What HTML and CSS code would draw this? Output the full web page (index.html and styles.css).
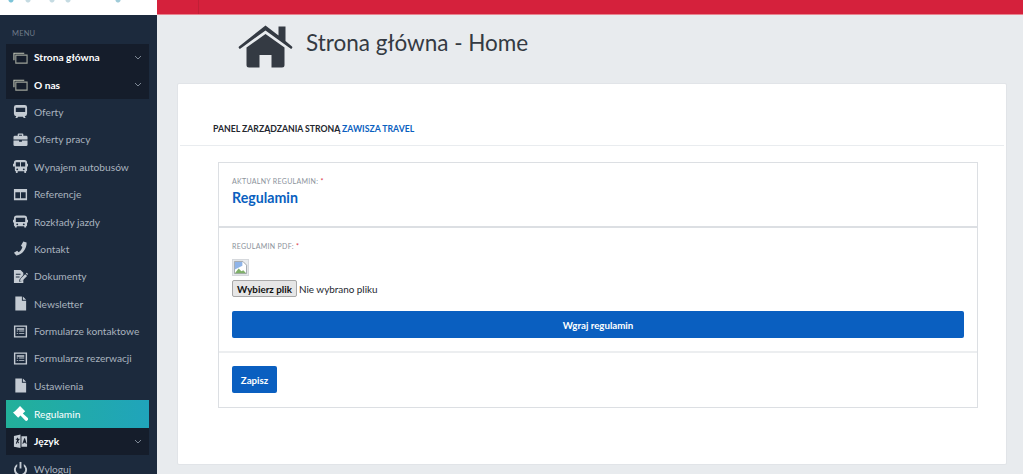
FILE: index.html
```html
<!DOCTYPE html>
<html lang="pl">
<head>
<meta charset="utf-8">
<title>Strona główna - Home</title>
<link rel="stylesheet" href="styles.css">
</head>
<body>
<div class="layout">
<aside class="side">
<div class="logo"></div>
<div class="menu-label">MENU</div>
<nav class="menu">
<a class="item open"><svg class="ic" viewBox="0 0 16 16"><path d="M1 11V3.500h11" fill="none" stroke="#c3c8b8" stroke-width="1.200"/><path d="M3 5.500h12v8.500H3z" fill="none" stroke="#9ea39a" stroke-width="1.200"/></svg><span>Strona główna</span><svg class="chev" viewBox="0 0 8 5"><path d="M1 1l3 3 3-3" fill="none" stroke="#7d8794"/></svg></a>
<a class="item open"><svg class="ic" viewBox="0 0 16 16"><path d="M1 11V3.500h11" fill="none" stroke="#c3c8b8" stroke-width="1.200"/><path d="M3 5.500h12v8.500H3z" fill="none" stroke="#9ea39a" stroke-width="1.200"/></svg><span>O nas</span><svg class="chev" viewBox="0 0 8 5"><path d="M1 1l3 3 3-3" fill="none" stroke="#7d8794"/></svg></a>
<a class="item"><svg class="ic" viewBox="0 0 16 16"><path fill-rule="evenodd" d="M3.500 1h9A2.500 2.500 0 0 1 15 3.500v7a2.500 2.500 0 0 1-2.500 2.500l1 2h-2l-1-1.500h-5l-1 1.500h-2l1-2A2.500 2.500 0 0 1 1 10.500v-7A2.500 2.500 0 0 1 3.500 1zM3 4v4.500h10V4z"/></svg><span>Oferty</span></a>
<a class="item"><svg class="ic" viewBox="0 0 16 16"><path d="M5 4V2.500A1 1 0 0 1 6 1.500h4a1 1 0 0 1 1 1V4h3a1.500 1.500 0 0 1 1.500 1.500V8h-15V5.500A1.500 1.500 0 0 1 2 4zm1.400 0h3.200V3H6.400zM.5 9h6v1.500h3V9h6v4.500A1.500 1.500 0 0 1 14 15H2a1.500 1.500 0 0 1-1.500-1.500z"/></svg><span>Oferty pracy</span></a>
<a class="item"><svg class="ic" viewBox="0 0 16 16"><path fill-rule="evenodd" d="M4 1h8a3 3 0 0 1 3 3v1h1v3h-1v4a1 1 0 0 1-1 1v1.500a.5.5 0 0 1-.5.5h-1a.5.5 0 0 1-.5-.5V13H5v1.500a.5.5 0 0 1-.5.5h-1a.5.5 0 0 1-.5-.5V13a1 1 0 0 1-1-1V8H0V5h1V4a3 3 0 0 1 3-3zm-1 2.500V8h4.500V3.500zm5.500 0V8H13V3.500zM4.500 10a1 1 0 1 0 0 2 1 1 0 0 0 0-2zm7 0a1 1 0 1 0 0 2 1 1 0 0 0 0-2z"/></svg><span>Wynajem autobusów</span></a>
<a class="item"><svg class="ic" viewBox="0 0 16 16"><path fill-rule="evenodd" d="M1 2h14v12H1zm1.500 3.500V12h5V5.500zm6 0V12h5V5.500z"/></svg><span>Referencje</span></a>
<a class="item"><svg class="ic" viewBox="0 0 16 16"><path fill-rule="evenodd" d="M4 1.500h8a3 3 0 0 1 3 3V6h1v3h-1v3a1 1 0 0 1-1 1v1a.5.5 0 0 1-.5.5h-1A.5.5 0 0 1 12 14v-1H4v1a.5.5 0 0 1-.5.5h-1A.5.5 0 0 1 2 14v-1a1 1 0 0 1-1-1V9H0V6h1V4.500a3 3 0 0 1 3-3zM3 4v4.500h10V4zm1.500 6a1 1 0 1 0 0 2 1 1 0 0 0 0-2zm7 0a1 1 0 1 0 0 2 1 1 0 0 0 0-2z"/></svg><span>Rozkłady jazdy</span></a>
<a class="item"><svg class="ic" viewBox="0 0 16 16"><path d="M11 .5l3.500 1c.3 6.500-4.500 13-11 14L1 12.500l3.500-2 1.500 1.500c2-1 3.500-3.500 4-5.500L8.500 5z"/></svg><span>Kontakt</span></a>
<a class="item"><svg class="ic" viewBox="0 0 16 16"><path d="M1 1h7l3 3v2.500L7 11l-.5 2.500L9 13l2-2v4H1zM3 5v1h5V5zm0 3v1h4V8z"/><path d="M8 10.500l5-5 2 2-5 5-2.500.500zM13.700 4.800l1-.8 1.300 1.300-.8 1.200z"/></svg><span>Dokumenty</span></a>
<a class="item"><svg class="ic" viewBox="0 0 16 16"><path d="M2.500 0.500h7v4.500H14v10.500H2.500zM10.500 .5L14 4h-3.500z"/></svg><span>Newsletter</span></a>
<a class="item"><svg class="ic" viewBox="0 0 16 16"><path fill-rule="evenodd" d="M1 1.500h14v13H1zm1.500 1.500v10h11V3zM4 4.500h8V6H4zm0 2.500h1.500v1H4zm2.500 0H12v1H6.500zM4 9.500h1.500v1H4zm2.500 0H12v1H6.500z"/></svg><span>Formularze kontaktowe</span></a>
<a class="item"><svg class="ic" viewBox="0 0 16 16"><path fill-rule="evenodd" d="M1 1.500h14v13H1zm1.500 1.500v10h11V3zM4 4.500h8V6H4zm0 2.500h1.500v1H4zm2.500 0H12v1H6.500zM4 9.500h1.500v1H4zm2.500 0H12v1H6.500z"/></svg><span>Formularze rezerwacji</span></a>
<a class="item"><svg class="ic" viewBox="0 0 16 16"><path d="M2.500 0.500h7v4.500H14v10.500H2.500zM10.500 .5L14 4h-3.500z"/></svg><span>Ustawienia</span></a>
<a class="item active"><svg class="ic" viewBox="0 0 16 16"><path d="M7.500 0L13 5.500 10.500 8l5 4.500a1.800 1.800 0 0 1-2.700 2.700L8 10.200 5.500 12.500 0 7l2-1.500 4-4z"/></svg><span>Regulamin</span></a>
<a class="item open"><svg class="ic" viewBox="0 0 16 16"><path fill-rule="evenodd" d="M1 2l7-1.500V15L1 13.500zM3 5v1h1.500L3 10l1 .5 1-2 1 1.500.6-.7L5.500 8l1-2H7V5H5.300V4h-1v1z"/><path fill-rule="evenodd" d="M9 2.500h6v11H9zm3 2l-2 6h1l.4-1.300h1.800L13.600 10.500h1L12.800 4.500z"/></svg><span>Język</span><svg class="chev" viewBox="0 0 8 5"><path d="M1 1l3 3 3-3" fill="none" stroke="#7d8794"/></svg></a>
<a class="item"><svg class="ic" viewBox="0 0 16 16"><path d="M7 1h2v7H7z"/><path d="M4.500 3.200v2.300a5 5 0 1 0 7 0V3.200a7 7 0 1 1-7 0z"/></svg><span>Wyloguj</span></a>
</nav>
</aside>
<div class="main">
<div class="topbar"><div class="topbar-cell"></div></div>
<header class="head">
<svg class="home" viewBox="0 0 54 43"><path fill="#343a43" d="M27 0.500L40 10.500V1.500h7v14.500l6.500 5.500a1.300 1.300 0 0 1-1.600 2L27 5.500 2.100 23.500a1.300 1.300 0 0 1-1.600-2z"/><path fill="#343a43" d="M27 9l19 13.500V40a2.500 2.500 0 0 1-2.500 2.500H33V30H21v12.500H10.500A2.500 2.500 0 0 1 8 40V22.500z"/></svg>
<h1>Strona główna - Home</h1>
</header>
<section class="card">
<div class="card-title">PANEL ZARZĄDZANIA STRONĄ <b>ZAWISZA TRAVEL</b></div>
<div class="box">
<div class="box-row current">
<div class="lbl">AKTUALNY REGULAMIN: <i>*</i></div>
<a class="doc">Regulamin</a>
</div>
<div class="box-row upload">
<div class="lbl">REGULAMIN PDF: <i>*</i></div>
<div class="thumb"><svg viewBox="0 0 16 16"><path fill="#fff" stroke="#9aa0a6" d="M1.500 1.500h9l4 4v9h-13z"/><path fill="#7fb069" d="M2 14l4-5 3 3 2-1 3 3z"/><path fill="#8fb4e8" d="M2 2h8v4l-8 4z"/></svg></div>
<div class="file"><button class="file-btn">Wybierz plik</button><span>Nie wybrano pliku</span></div>
<button class="btn wide">Wgraj regulamin</button>
</div>
<div class="box-row save">
<button class="btn">Zapisz</button>
</div>
</div>
</section>
</div>
</div>
</body>
</html>
```
FILE: styles.css
```css
*{box-sizing:border-box;}
html,body{margin:0;height:474px;overflow:hidden;}
body{font-family:Lato,Roboto,sans-serif;background:#e8ebee;color:#343a43;}
.layout{display:flex;height:474px;overflow:hidden;}
.side{width:157px;flex:none;background:#1c2a3d;}
.logo{height:15px;background-color:#fff;background-image:radial-gradient(circle at 11px 0,#7cc4d8 2px,transparent 3px),radial-gradient(circle at 28px 0,#c5dbe2 2px,transparent 3px),radial-gradient(circle at 52px 0,#c5dbe2 2px,transparent 3px),radial-gradient(circle at 68px 0,#c5dbe2 2px,transparent 3px),radial-gradient(circle at 118px 0,#9fcbd8 2px,transparent 3px);}
.menu-label{font-size:7.500px;letter-spacing:.2px;color:#6f7b8a;padding:14px 0 0 12px;height:29px;}
.menu{padding:0 8px 0 6px;}
.item{display:flex;align-items:center;height:27.4px;padding:0 0 1px 7px;font-size:10.2px;color:#a9b3bf;white-space:nowrap;}
.item span{flex:1;}
.ic{width:15px;height:15px;margin-right:6px;fill:#c4cbd3;flex:none;}
.chev{width:8px;height:5px;margin-right:7px;}
.item.open{background:#151d2b;color:#fff;font-weight:700;}
.item.active{background:linear-gradient(90deg,#22b09a,#20a4bb);color:#fff;height:28px;}
.item.active .ic{fill:#fff;}
.main{flex:1;min-width:0;}
.topbar{height:15px;background:#d5213c;border-bottom:1px solid #e8838f;}
.topbar-cell{width:42px;height:14px;border-right:1px solid #c11f36;}
.head{display:flex;align-items:flex-start;height:68px;padding:10px 0 0 81px;}
.home{width:55px;height:43px;margin-right:13px;flex:none;}
.head h1{margin:3px 0 0;font-size:22.500px;line-height:30px;font-weight:400;}
.card{margin:0 16px 0 20px;height:382px;background:#fff;border:1px solid #e1e4e8;border-radius:2px;padding:0 2px;}
.card-title{height:62px;padding:39px 0 0 33px;font-size:8.700px;font-weight:700;color:#23272e;border-bottom:1px solid #e9ecef;}
.card-title b{color:#0a5fc0;font-weight:700;}
.box{margin:16px 26px 0 38px;height:246px;border:1px solid #dcdfe3;}
.box-row{padding:0 13px;}
.current{height:65px;padding-top:13px;border-bottom:2px solid #dcdfe3;}
.upload{height:125px;padding-top:13px;border-bottom:2px solid #eceef0;}
.lbl{font-size:7px;letter-spacing:.3px;color:#8b929b;line-height:11px;}
.lbl i{color:#dc3545;font-style:normal;}
.doc{display:block;margin-top:2px;font-size:14.200px;font-weight:700;color:#0a5fc0;}
.thumb{width:17px;height:17px;margin-top:7px;background:#e9ecef;border:1px solid #d5d8dc;}
.thumb svg{display:block;width:15px;height:15px;}
.file{display:flex;align-items:center;margin-top:4px;font-size:9.900px;color:#23272e;}
.file-btn{width:65px;height:17px;padding:0;margin-right:2px;font:700 9.800px Lato,sans-serif;color:#111;background:#e6e6e6;border:1px solid #a8a8a8;border-radius:2px;white-space:nowrap;}
.btn{height:27px;width:45px;padding:0;background:#0a5fc0;color:#fff;border:0;border-radius:2px;font:700 9.700px Lato,sans-serif;}
.wide{display:block;width:100%;margin-top:14px;}
.save{padding-top:13px;}
```
